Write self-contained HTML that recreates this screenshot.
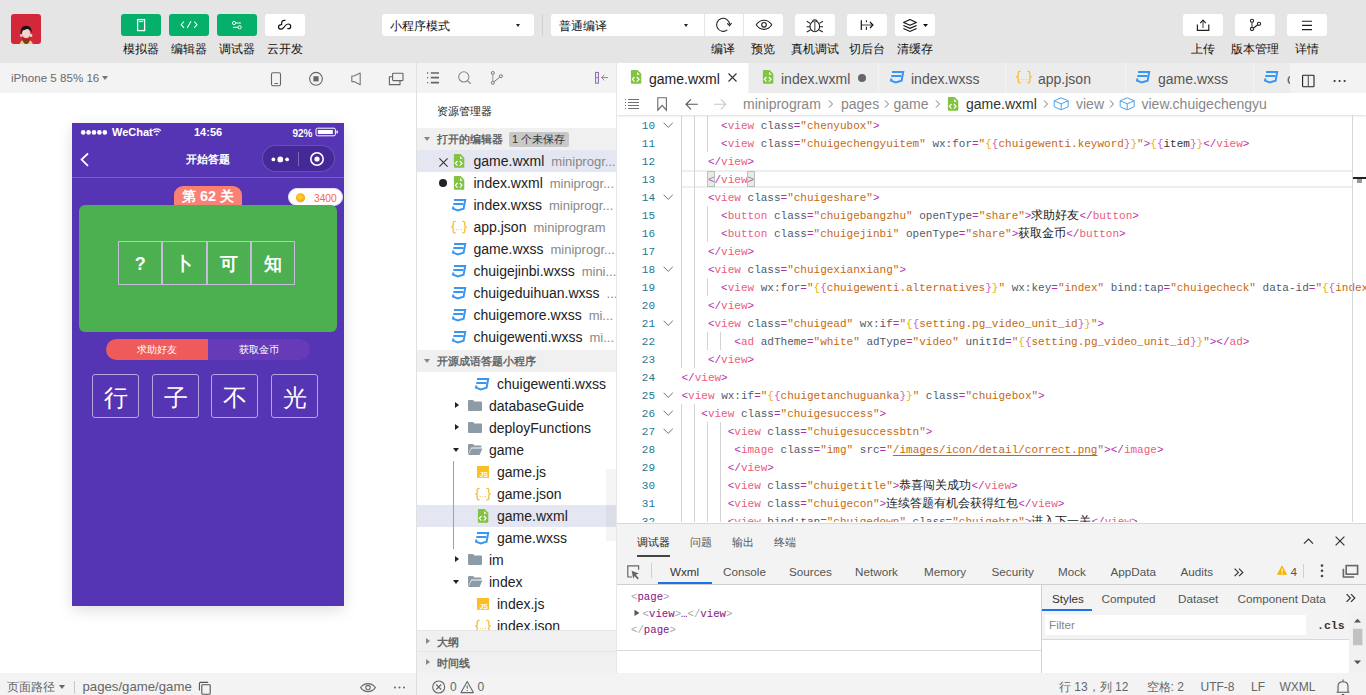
<!DOCTYPE html>
<html><head><meta charset="utf-8">
<style>
*{box-sizing:border-box;margin:0;padding:0}
html,body{width:1366px;height:695px;overflow:hidden;background:#fff;font-family:"Liberation Sans",sans-serif;color:#222}
.a{position:absolute}
#top{left:0;top:0;width:1366px;height:63px;background:#e5e5e5}
.btn{position:absolute;top:14px;width:40px;height:22px;border-radius:3px;background:#fff}
.btn.g{background:#05b06a}
.lbl{position:absolute;top:41px;font-size:12px;line-height:16px;color:#111;text-align:center;white-space:nowrap}
.dd{position:absolute;top:14px;height:22px;background:#fff;border-radius:3px;font-size:12px;line-height:25px;padding-left:8px;color:#111}
.caret{position:absolute;width:0;height:0;border-left:3px solid transparent;border-right:3px solid transparent;border-top:4px solid #222}
svg{position:absolute;overflow:visible}
#simhdr{left:0;top:63px;width:416px;height:30px;background:#f3f3f3}
#sim{left:0;top:93px;width:416px;height:580px;background:#fff}
#foot{left:0;top:673px;width:1366px;height:22px;background:#f3f3f3}
#vsep1{left:416px;top:63px;width:1px;height:610px;background:#e0e0e0}
#exp{left:417px;top:63px;width:199px;height:610px;background:#fff;overflow:hidden}
#edit{left:617px;top:63px;width:749px;height:459px;background:#fff;overflow:hidden}
#dbg{left:617px;top:522px;width:749px;height:151px;background:#f3f3f3}
.ab{width:44.25px;height:44px;border:1px solid #c5bdd9;color:#fff;font-size:18px;font-weight:bold;line-height:44px;text-align:center}
.lb{position:absolute;top:251px;width:47px;height:44px;border:1px solid #b2a5e2;border-radius:3px;color:#fff;font-size:24px;line-height:45px;text-align:center}
.er{position:absolute;left:0;width:199px;height:22px}
.en{position:absolute;top:0;font-size:14px;line-height:22px;color:#222;white-space:nowrap}
.suf{font-size:13px;color:#888;margin-left:7px}
.sh{position:absolute;left:0;width:199px;height:22px;background:#f0f0f0;font-size:11px;line-height:22px;color:#666;font-weight:bold;padding-left:20px}
.tri{position:absolute;left:7px;top:9px;width:0;height:0;border-left:3px solid transparent;border-right:3px solid transparent;border-top:4px solid #888}
.tri.r{left:9px;top:7px;border-top:3px solid transparent;border-bottom:3px solid transparent;border-left:4px solid #888;border-right:none}
.badge{display:inline-block;margin-left:6px;padding:0 4px 0 3px;height:15px;line-height:15px;background:#c8c8c8;border-radius:2px;color:#333;font-weight:normal;font-size:11px;vertical-align:0px}
.tr{position:absolute;width:0;height:0;border-top:3.5px solid transparent;border-bottom:3.5px solid transparent;border-left:4px solid #222}
.td{position:absolute;width:0;height:0;border-left:3.5px solid transparent;border-right:3.5px solid transparent;border-top:4px solid #222}
.tab{position:absolute;top:1px;font-size:14px;line-height:30px;color:#555;white-space:nowrap}
.bc{position:absolute;top:30px;font-size:14px;line-height:22px;color:#888;white-space:nowrap}
.ln{position:absolute;left:0;width:38px;text-align:right;font-family:"Liberation Mono",monospace;font-size:11px;line-height:18px;color:#237893}
.cl{position:absolute;left:64.5px;font-family:"Liberation Mono",monospace;font-size:11px;line-height:18px;white-space:pre;color:#333}
.cj{font-size:12px;color:#222}
.dt{position:absolute;top:12px;font-size:11px;line-height:16px;color:#555}
.dv{position:absolute;top:38px;font-size:11.7px;line-height:24px;color:#555;white-space:nowrap}
.mt{position:absolute;font-family:"Liberation Mono",monospace;font-size:10.7px;line-height:17px;white-space:pre}
.bk{color:#a7a7a7}.tg{color:#881280}
.ft{position:absolute;top:6px;font-size:12px;line-height:16px;color:#666;white-space:nowrap}
</style></head><body>
<svg width="0" height="0" style="position:absolute">
<defs>
<symbol id="i-wxml" viewBox="0 0 22 22"><path d="M6.9 4 H12.6 L16.3 7.7 V16.7 Q16.3 17.7 15.3 17.7 H6.9 Q5.9 17.7 5.9 16.7 V5 Q5.9 4 6.9 4 Z" fill="#82c341"/><path d="M12 6 V8.8 H14.8 Z" fill="#fff"/><path d="M9.5 11 L7.4 13.3 L9.5 15.6 M11.8 11 L14 13.3 L11.8 15.6" stroke="#fff" stroke-width="1.2" fill="none"/></symbol>
<symbol id="i-css" viewBox="0 0 22 22"><path d="M6 6 H17.2 L15.6 14.6 L9.8 16.4 L5 14.6 L5.5 12.6 M5.3 10 H15.2" stroke="#3a97f0" stroke-width="2" fill="none" stroke-linejoin="miter"/></symbol>
<symbol id="i-json" viewBox="0 0 22 22"><path d="M9.7 5.4 H9 Q7.2 5.4 7.2 7 V9.4 Q7.2 10.9 5.2 10.9 Q7.2 10.9 7.2 12.4 V15.2 Q7.2 16.8 9 16.8 H9.7 M16.3 5.4 H17 Q18.8 5.4 18.8 7 V9.4 Q18.8 10.9 20.8 10.9 Q18.8 10.9 18.8 12.4 V15.2 Q18.8 16.8 17 16.8 H16.3" stroke="#f8bb33" stroke-width="1.3" fill="none"/><g fill="#f8c75a"><rect x="9.8" y="13.1" width="1.1" height="1.1"/><rect x="12.3" y="13.1" width="1.1" height="1.1"/><rect x="14.9" y="13.1" width="1.1" height="1.1"/></g></symbol>
<symbol id="i-js" viewBox="0 0 22 22"><rect x="7" y="5" width="12" height="11.8" fill="#fbbf24"/><text x="18" y="16" font-size="7" font-family="Liberation Sans" font-weight="bold" fill="#fff" text-anchor="end">JS</text></symbol>
<symbol id="i-folder" viewBox="0 0 22 22"><path d="M4 6 Q4 5 5 5 H9 L10.5 6.5 H17 Q18 6.5 18 7.5 V15 Q18 16 17 16 H5 Q4 16 4 15 Z" fill="#8c9ba6"/></symbol>
<symbol id="i-folderopen" viewBox="0 0 22 22"><path d="M4 6 Q4 5 5 5 H9 L10.5 6.5 H16.6 Q17.4 6.5 17.4 7.4 V8.6 H7.4 L4 15.6 Z" fill="#8c9ba6"/><path d="M7.6 9.6 H18.4 L15.6 16 H4.2 Z" fill="#8c9ba6"/></symbol>
</defs></svg>
<div id="top" class="a">
  <div class="a" style="left:11px;top:14px;width:30px;height:30px;border-radius:3px;background:#d2283a;overflow:hidden">
    <svg width="30" height="30" style="left:0;top:0">
      <path d="M8.6 30 Q9.6 26.6 13 26 H17.6 Q21 26.6 21.8 30 Z" fill="#e8d060"/>
      <ellipse cx="15.2" cy="19.4" rx="4.2" ry="4.6" fill="#f3d6cc"/>
      <path d="M11.2 24 Q12 30 15.2 30 Q18.4 30 19.2 24 Q15.2 26.4 11.2 24 Z" fill="#7a3b22"/>
      <path d="M9.6 19.2 Q9.2 12.2 15 11.8 Q21 12 20.6 18.6 Q19.6 15.4 17 14.8 Q14 16.2 11.4 16.4 Q10.6 18 10.8 20.4 Z" fill="#141414"/>
      <rect x="9.2" y="20.2" width="2.2" height="2.6" fill="#ddd"/><rect x="19" y="20.2" width="2.2" height="2.6" fill="#ddd"/>
    </svg>
  </div>
  <div class="btn g" style="left:121px"></div>
  <div class="btn g" style="left:169px"></div>
  <div class="btn g" style="left:217px"></div>
  <div class="btn" style="left:265px"></div>
  <div class="lbl" style="left:121px;width:40px">模拟器</div>
  <div class="lbl" style="left:169px;width:40px">编辑器</div>
  <div class="lbl" style="left:217px;width:40px">调试器</div>
  <div class="lbl" style="left:265px;width:40px">云开发</div>

  <div class="dd" style="left:382px;width:152px">小程序模式<span class="caret" style="left:134px;top:10px;border-left-width:2.5px;border-right-width:2.5px;border-top-width:3px"></span></div>
  <div class="a" style="left:542px;top:14px;width:1px;height:22px;background:#d0d0d0"></div>
  <div class="dd" style="left:551px;width:232px;">普通编译<span class="caret" style="left:133px;top:10px;border-left-width:2.5px;border-right-width:2.5px;border-top-width:3px"></span></div>
  <div class="a" style="left:704px;top:14px;width:1px;height:22px;background:#e5e5e5"></div>
  <div class="a" style="left:743px;top:14px;width:1px;height:22px;background:#e5e5e5"></div>
  <div class="btn" style="left:795px"></div>
  <div class="btn" style="left:847px"></div>
  <div class="btn" style="left:895px"></div>
  <div class="lbl" style="left:703px;width:40px">编译</div>
  <div class="lbl" style="left:743px;width:40px">预览</div>
  <div class="lbl" style="left:789px;width:52px">真机调试</div>
  <div class="lbl" style="left:847px;width:40px">切后台</div>
  <div class="lbl" style="left:895px;width:40px">清缓存</div>

  <div class="btn" style="left:1183px"></div>
  <div class="btn" style="left:1235px"></div>
  <div class="btn" style="left:1287px"></div>
  <div class="lbl" style="left:1183px;width:40px">上传</div>
  <div class="lbl" style="left:1229px;width:52px">版本管理</div>
  <div class="lbl" style="left:1287px;width:40px">详情</div>

  <svg width="1366" height="63" style="left:0;top:0" fill="none" stroke-width="1.2">
    <!-- simulator phone -->
    <rect x="137.6" y="19.6" width="7" height="11" stroke="#fff" stroke-width="1.3"/>
    <line x1="139" y1="21.6" x2="143.2" y2="21.6" stroke="#fff" stroke-width="1"/>
    <!-- code -->
    <path d="M184 21.5 L181.2 24.7 L184 27.8 M191 21.3 L187.2 28 M194.2 21.5 L197 24.7 L194.2 27.8" stroke="#fff" stroke-width="1.1"/>
    <!-- debugger sliders -->
    <circle cx="234" cy="23" r="1.6" stroke="#fff" stroke-width="1"/>
    <line x1="235.6" y1="23" x2="241" y2="23" stroke="#fff" stroke-width="1"/>
    <circle cx="239.6" cy="27.3" r="1.6" stroke="#fff" stroke-width="1"/>
    <line x1="233" y1="27.3" x2="238" y2="27.3" stroke="#fff" stroke-width="1"/>
    <!-- cloud -->
    <path d="M285.5 20.5 C283.8 20.1 281.8 20.6 281.7 22.6 L281.6 24.6 C279.8 24.6 278.5 25.6 278.5 26.9 C278.5 28.3 279.7 29.1 281 29.1 C282.4 29.1 283.4 28 284.3 26.8 C285.2 25.5 286.2 24 288.2 24 C289.6 24 290.7 25 290.7 26.4 C290.7 27.8 289.7 28.7 288.4 28.7 L287.3 28.5" stroke="#111" stroke-width="1.2"/>
    <!-- refresh -->
    <path d="M727.3 29.8 A6.5 6.5 0 1 1 729.6 24.6" stroke="#222" stroke-width="1.1"/>
    <path d="M727.2 23.4 L729.6 25.6 L731.6 23" stroke="#222" stroke-width="1.1"/>
    <!-- eye -->
    <path d="M756.2 24.8 C758.5 21.4 761 20.2 764 20.2 C767 20.2 769.5 21.4 771.8 24.8 C769.5 28.2 767 29.4 764 29.4 C761 29.4 758.5 28.2 756.2 24.8 Z" stroke="#222" stroke-width="1.1"/>
    <circle cx="764" cy="24.8" r="2.3" stroke="#222" stroke-width="1.1"/>
    <!-- bug -->
    <ellipse cx="814.8" cy="26.4" rx="4.8" ry="5.4" stroke="#222" stroke-width="1.1"/>
    <path d="M812.3 21.6 A2.6 2.6 0 0 1 817.3 21.6" stroke="#222" stroke-width="1.1"/>
    <line x1="814.8" y1="21.2" x2="814.8" y2="31.6" stroke="#666" stroke-width="1.3"/>
    <path d="M810.2 23.4 L806.8 21.2 M810 26.8 L806.6 26.8 M810.4 30 L806.8 32 M819.4 23.4 L822.8 21.2 M819.6 26.8 L823 26.8 M819.2 30 L822.8 32" stroke="#222" stroke-width="1.1"/>
    <!-- background -->
    <line x1="861.3" y1="20.2" x2="861.3" y2="29.9" stroke="#111" stroke-width="1.2"/>
    <path d="M866.4 20.2 V22.2 M866.4 26.8 V29.9" stroke="#222" stroke-width="1.1"/>
    <line x1="862" y1="25" x2="872" y2="25" stroke="#777" stroke-width="1.4"/>
    <path d="M870 22 L872.9 25 L870 28" stroke="#111" stroke-width="1.2"/>
    <!-- layers -->
    <path d="M910 19.6 L916.4 22.4 L910 25.2 L903.6 22.4 Z" stroke="#111" stroke-width="1.1" stroke-linejoin="round"/>
    <path d="M903.4 25.4 L910 28.3 L916.6 25.4 M903.4 28.5 L910 31.4 L916.6 28.5" stroke="#111" stroke-width="1.1"/>
    <path d="M923 24 L928 24 L925.5 27 Z" fill="#111" stroke="none"/>
    <!-- upload -->
    <path d="M1197.4 24.6 V30.4 H1208.8 V24.6" stroke="#222" stroke-width="1.2"/>
    <line x1="1203" y1="20.6" x2="1203" y2="28" stroke="#666" stroke-width="1.3"/>
    <path d="M1200.2 23.2 L1203 20.2 L1205.8 23.2" stroke="#222" stroke-width="1.2"/>
    <!-- branch -->
    <circle cx="1252" cy="20.8" r="1.6" stroke="#222" stroke-width="1.1"/>
    <circle cx="1252" cy="29" r="1.6" stroke="#222" stroke-width="1.1"/>
    <circle cx="1259" cy="23.8" r="1.6" stroke="#222" stroke-width="1.1"/>
    <line x1="1252" y1="22.4" x2="1252" y2="27.4" stroke="#555" stroke-width="1.2"/>
    <line x1="1253.4" y1="28.2" x2="1257.6" y2="24.8" stroke="#222" stroke-width="1.1"/>
    <!-- menu -->
    <path d="M1302 21.3 H1312 M1302 25.4 H1312 M1302 29.6 H1312" stroke="#222" stroke-width="1.1"/>
  </svg>
</div>

<div id="simhdr" class="a">
  <div class="a" style="left:11px;top:7px;font-size:11.6px;line-height:16px;color:#6a6a6a">iPhone 5 85% 16</div>
  <span class="caret" style="left:102px;top:13px;border-top-color:#777;border-left-width:3.5px;border-right-width:3.5px"></span>
  <svg width="416" height="30" style="left:0;top:0" fill="none">
    <rect x="271.5" y="72.8" width="9" height="13" rx="1.5" stroke="#666" stroke-width="1.1" transform="translate(0,-63)"/>
    <line x1="274.5" y1="20.5" x2="278" y2="20.5" stroke="#666" stroke-width="1"/>
    <circle cx="316" cy="15.8" r="6.4" stroke="#666" stroke-width="1.1"/>
    <rect x="313.4" y="13.2" width="5.2" height="5.2" fill="#666"/>
    <path d="M351.8 13 H354 L360.2 10 V21.8 L354 18.6 H351.8 Z" stroke="#777" stroke-width="1.1" stroke-linejoin="round"/>
    <rect x="392.6" y="10.2" width="10.4" height="7.4" rx="0.8" stroke="#666" stroke-width="1.1"/>
    <path d="M392.4 13.8 H389.4 V21.6 H400 V17.8" stroke="#666" stroke-width="1.1"/>
  </svg>
</div>
<div id="sim" class="a">
  <div id="phone" class="a" style="left:72px;top:30px;width:272px;height:483px;background:#5535b4;box-shadow:0 4px 14px rgba(0,0,0,0.13);overflow:hidden">
    <svg width="272" height="60" style="left:0;top:0">
      <g fill="#fff"><circle cx="11.2" cy="9.4" r="2.3"/><circle cx="16.6" cy="9.4" r="2.3"/><circle cx="22" cy="9.4" r="2.3"/><circle cx="27.4" cy="9.4" r="2.3"/><circle cx="32.8" cy="9.4" r="2.3"/></g>
      <path d="M80.4 7.6 A6 6 0 0 1 89 7.6" stroke="#fff" stroke-width="1.2" fill="none"/>
      <path d="M82 9.4 A3.6 3.6 0 0 1 87.4 9.4" stroke="#fff" stroke-width="1.2" fill="none"/>
      <circle cx="84.7" cy="11.4" r="1" fill="#fff"/>
      <rect x="244" y="5.2" width="19.4" height="7.6" rx="1.4" stroke="#fff" stroke-width="1" fill="none"/>
      <rect x="245.8" y="7" width="15" height="4" fill="#fff"/>
      <rect x="264.4" y="7.6" width="1.4" height="2.8" fill="#fff"/>
      <path d="M16 30.5 L9.6 36.6 L16 42.8" stroke="#fff" stroke-width="1.8" fill="none"/>
      <line x1="0" y1="54.5" x2="272" y2="54.5" stroke="#7460c4" stroke-width="1"/>
    </svg>
    <div class="a" style="left:40px;top:2px;font-size:11px;line-height:14px;color:#fff;font-weight:bold">WeChat</div>
    <div class="a" style="left:122px;top:2px;font-size:11px;line-height:14px;color:#fff;font-weight:bold">14:56</div>
    <div class="a" style="left:220.5px;top:4px;font-size:10px;line-height:14px;color:#fff;font-weight:bold">92%</div>
    <div class="a" style="left:0;top:28px;width:272px;text-align:center;font-size:11px;line-height:16px;color:#fff;font-weight:bold">开始答题</div>
    <div class="a" style="left:190px;top:22px;width:73px;height:27px;border-radius:14px;background:rgba(20,0,60,0.22);border:1px solid rgba(255,255,255,0.18)"></div>
    <svg width="272" height="60" style="left:0;top:0">
      <circle cx="201.4" cy="36.4" r="1.9" fill="#fff"/><circle cx="208.3" cy="36.4" r="2.9" fill="#fff"/><circle cx="215.1" cy="36.4" r="1.9" fill="#fff"/>
      <line x1="226.5" y1="29" x2="226.5" y2="43" stroke="rgba(255,255,255,0.3)" stroke-width="1"/>
      <circle cx="245" cy="36" r="6.2" stroke="#fff" stroke-width="1.6" fill="none"/>
      <circle cx="245" cy="36" r="2.6" fill="#fff"/>
    </svg>
    <div class="a" style="left:102px;top:63px;width:68px;height:22px;background:#fa8073;border-radius:9px 9px 0 0;color:#fff;font-size:14.4px;line-height:21px;text-align:center;font-weight:bold">第 62 关</div>
    <div class="a" style="left:216px;top:65px;width:55px;height:18px;background:#fff;border-radius:9px;border:1px solid #e8e0f0"></div>
    <svg width="272" height="100" style="left:0;top:0"><defs><radialGradient id="cg" cx="0.45" cy="0.45" r="0.6"><stop offset="0" stop-color="#ffd43a"/><stop offset="1" stop-color="#f5a210"/></radialGradient></defs><circle cx="228.5" cy="74.8" r="4.6" fill="url(#cg)"/></svg>
    <div class="a" style="left:242px;top:69.5px;font-size:10.2px;line-height:12px;color:#f5683f">3400</div>
    <div class="a" style="left:7px;top:82px;width:258px;height:127px;background:#4caf50;border-radius:6px"></div>
    <div class="a" style="left:46px;top:118px;width:177px;height:44px;display:flex">
      <div class="ab">?</div><div class="ab">卜</div><div class="ab">可</div><div class="ab">知</div>
    </div>
    <div class="a" style="left:34px;top:216px;width:102px;height:21px;background:#ef5b5b;border-radius:11px 0 0 11px;color:#fff;font-size:9.6px;line-height:21px;text-align:center">求助好友</div>
    <div class="a" style="left:136px;top:216px;width:102px;height:21px;background:#673ab7;border-radius:0 11px 11px 0;color:#fff;font-size:9.6px;line-height:21px;text-align:center">获取金币</div>
    <div class="lb" style="left:20px">行</div>
    <div class="lb" style="left:80px">子</div>
    <div class="lb" style="left:139px">不</div>
    <div class="lb" style="left:199px">光</div>
  </div>
</div>
<div id="vsep1" class="a"></div>
<div class="a" style="left:616px;top:63px;width:1px;height:610px;background:#e6e6e6;z-index:2"></div>
<div id="exp" class="a">
  <div class="a" style="left:0;top:0;width:199px;height:30px;background:#f3f3f3"></div>
  <svg width="199" height="30" style="left:0;top:0" fill="none">
    <path d="M10 10 H11.2 M10 14.6 H11.2 M10 19.6 H11.2" stroke="#666" stroke-width="1.4"/>
    <path d="M13.8 10 H22 M13.8 14.6 H22 M13.8 19.6 H22" stroke="#666" stroke-width="1.6"/>
    <circle cx="46.8" cy="13.9" r="5.1" stroke="#8a8a8a" stroke-width="1.1"/><line x1="50.4" y1="17.6" x2="53.8" y2="20.8" stroke="#8a8a8a" stroke-width="1.2"/>
    <circle cx="75.8" cy="10" r="1.5" stroke="#777" stroke-width="1"/><circle cx="75.8" cy="19.8" r="1.5" stroke="#777" stroke-width="1"/><circle cx="83.9" cy="13.2" r="1.5" stroke="#777" stroke-width="1"/>
    <line x1="75.8" y1="11.5" x2="75.8" y2="18.3" stroke="#7a9ab0" stroke-width="1"/><line x1="76.9" y1="18.8" x2="82.8" y2="14.2" stroke="#777" stroke-width="1"/>
    <rect x="178.6" y="9.4" width="2.8" height="10.8" stroke="#8a62b8" stroke-width="1"/><line x1="178.6" y1="14.6" x2="181.4" y2="14.6" stroke="#8a62b8" stroke-width="0.8"/>
    <path d="M184.6 14.6 H191 M187.4 11.8 L184.6 14.6 L187.4 17.4" stroke="#888" stroke-width="1"/>
  </svg>
  <div class="a" style="left:20px;top:40px;font-size:11px;line-height:16px;color:#222">资源管理器</div>
  <div class="sh" style="top:65px"><span class="tri"></span>打开的编辑器<span class="badge">1 个未保存</span></div>
  <div class="er" style="top:87px;background:#e4e6f1;"><svg width="12" height="12" style="left:21px;top:6.5px"><path d="M1.4 1.4 L9.6 9.6 M9.6 1.4 L1.4 9.6" stroke="#333" stroke-width="1.1"/></svg><svg width="22" height="22" style="left:31px;top:0"><use href="#i-wxml"/></svg><div class="en" style="left:56.5px">game.wxml<span class="suf">miniprogr...</span></div></div>
  <div class="er" style="top:109px;"><div class="a" style="left:22px;top:7px;width:8px;height:8px;border-radius:50%;background:#222"></div><svg width="22" height="22" style="left:31px;top:0"><use href="#i-wxml"/></svg><div class="en" style="left:56.5px">index.wxml<span class="suf">miniprogr...</span></div></div>
  <div class="er" style="top:131px;"><svg width="22" height="22" style="left:31px;top:0"><use href="#i-css"/></svg><div class="en" style="left:56.5px">index.wxss<span class="suf">miniprogr...</span></div></div>
  <div class="er" style="top:153px;"><svg width="22" height="22" style="left:29px;top:0"><use href="#i-json"/></svg><div class="en" style="left:56.5px">app.json<span class="suf">miniprogram</span></div></div>
  <div class="er" style="top:175px;"><svg width="22" height="22" style="left:31px;top:0"><use href="#i-css"/></svg><div class="en" style="left:56.5px">game.wxss<span class="suf">miniprogr...</span></div></div>
  <div class="er" style="top:197px;"><svg width="22" height="22" style="left:31px;top:0"><use href="#i-css"/></svg><div class="en" style="left:56.5px">chuigejinbi.wxss<span class="suf">mini...</span></div></div>
  <div class="er" style="top:219px;"><svg width="22" height="22" style="left:31px;top:0"><use href="#i-css"/></svg><div class="en" style="left:56.5px">chuigeduihuan.wxss<span class="suf">...</span></div></div>
  <div class="er" style="top:241px;"><svg width="22" height="22" style="left:31px;top:0"><use href="#i-css"/></svg><div class="en" style="left:56.5px">chuigemore.wxss<span class="suf">mi...</span></div></div>
  <div class="er" style="top:263px;"><svg width="22" height="22" style="left:31px;top:0"><use href="#i-css"/></svg><div class="en" style="left:56.5px">chuigewenti.wxss<span class="suf">mi...</span></div></div>
  <div class="sh" style="top:287px"><span class="tri"></span>开源成语答题小程序</div>
  <div class="er" style="top:310px;"><svg width="22" height="22" style="left:54px;top:0"><use href="#i-css"/></svg><div class="en" style="left:80px">chuigewenti.wxss</div></div>
  <div class="er" style="top:332px;"><span class="tr" style="left:38px;top:7px"></span><svg width="22" height="22" style="left:47px;top:0"><use href="#i-folder"/></svg><div class="en" style="left:72px">databaseGuide</div></div>
  <div class="er" style="top:354px;"><span class="tr" style="left:38px;top:7px"></span><svg width="22" height="22" style="left:47px;top:0"><use href="#i-folder"/></svg><div class="en" style="left:72px">deployFunctions</div></div>
  <div class="er" style="top:376px;"><span class="td" style="left:36px;top:9px"></span><svg width="22" height="22" style="left:47px;top:0"><use href="#i-folderopen"/></svg><div class="en" style="left:72px">game</div></div>
  <div class="er" style="top:398px;"><svg width="22" height="22" style="left:53px;top:0"><use href="#i-js"/></svg><div class="en" style="left:80px">game.js</div></div>
  <div class="er" style="top:420px;"><svg width="22" height="22" style="left:53px;top:0"><use href="#i-json"/></svg><div class="en" style="left:80px">game.json</div></div>
  <div class="er" style="top:442px;background:#e4e6f1;"><svg width="22" height="22" style="left:55px;top:0"><use href="#i-wxml"/></svg><div class="en" style="left:80px">game.wxml</div></div>
  <div class="er" style="top:464px;"><svg width="22" height="22" style="left:54px;top:0"><use href="#i-css"/></svg><div class="en" style="left:80px">game.wxss</div></div>
  <div class="er" style="top:486px;"><span class="tr" style="left:38px;top:7px"></span><svg width="22" height="22" style="left:47px;top:0"><use href="#i-folder"/></svg><div class="en" style="left:72px">im</div></div>
  <div class="er" style="top:508px;"><span class="td" style="left:36px;top:9px"></span><svg width="22" height="22" style="left:47px;top:0"><use href="#i-folderopen"/></svg><div class="en" style="left:72px">index</div></div>
  <div class="er" style="top:530px;"><svg width="22" height="22" style="left:53px;top:0"><use href="#i-js"/></svg><div class="en" style="left:80px">index.js</div></div>
  <div class="er" style="top:552px;"><svg width="22" height="22" style="left:53px;top:0"><use href="#i-json"/></svg><div class="en" style="left:80px">index.json</div></div>
  <div class="a" style="left:36px;top:398px;width:1px;height:88px;background:#a0a0a0"></div>
  <div class="a" style="left:189px;top:406px;width:10px;height:72px;background:rgba(0,0,0,0.04)"></div>
  <div class="sh" style="top:567px;border-top:1px solid #e6e6e6"><span class="tri r"></span>大纲</div>
  <div class="sh" style="top:588px;border-top:1px solid #e6e6e6"><span class="tri r"></span>时间线</div>
</div>
<div id="edit" class="a">
  <div class="a" style="left:0;top:0;width:749px;height:30px;background:#ececec"></div>
  <div class="a" style="left:0;top:0;width:131px;height:30px;background:#fff"></div>
  <div class="a" style="left:131px;top:0;width:1px;height:30px;background:#f4f4f4"></div>
  <div class="a" style="left:261px;top:0;width:1px;height:30px;background:#f4f4f4"></div>
  <div class="a" style="left:388px;top:0;width:1px;height:30px;background:#f4f4f4"></div>
  <div class="a" style="left:508px;top:0;width:1px;height:30px;background:#f4f4f4"></div>
  <div class="a" style="left:636px;top:0;width:1px;height:30px;background:#f4f4f4"></div>
  <svg width="22" height="22" style="left:8px;top:3px"><use href="#i-wxml"/></svg>
  <div class="tab" style="left:32px;color:#222">game.wxml</div>
  <svg width="12" height="12" style="left:110px;top:9px"><path d="M1.5 1.5 L9.5 9.5 M9.5 1.5 L1.5 9.5" stroke="#333" stroke-width="1.1"/></svg>
  <svg width="22" height="22" style="left:140px;top:3px"><use href="#i-wxml"/></svg>
  <div class="tab" style="left:164px">index.wxml</div>
  <div class="a" style="left:241px;top:11px;width:8px;height:8px;border-radius:50%;background:#666"></div>
  <svg width="22" height="22" style="left:269px;top:3px"><use href="#i-css"/></svg>
  <div class="tab" style="left:294px">index.wxss</div>
  <svg width="22" height="22" style="left:394px;top:3px"><use href="#i-json"/></svg>
  <div class="tab" style="left:421px">app.json</div>
  <svg width="22" height="22" style="left:515px;top:3px"><use href="#i-css"/></svg>
  <div class="tab" style="left:541px">game.wxss</div>
  <svg width="22" height="22" style="left:643px;top:3px"><use href="#i-css"/></svg>
  <div class="tab" style="left:670px">c</div>
  <div class="a" style="left:673px;top:0;width:76px;height:30px;background:#f3f3f3"></div>
  <svg width="76" height="30" style="left:673px;top:0" fill="none">
    <rect x="12.6" y="12.3" width="11.4" height="11.4" rx="0.8" stroke="#222" stroke-width="1.1"/>
    <line x1="18.3" y1="12.3" x2="18.3" y2="23.7" stroke="#555" stroke-width="1.1"/>
    <circle cx="44.6" cy="18" r="1.1" fill="#333"/><circle cx="49.6" cy="18" r="1.1" fill="#333"/><circle cx="54.6" cy="18" r="1.1" fill="#333"/>
  </svg>
  <div class="a" style="left:0;top:30px;width:749px;height:22px;background:#fff;box-shadow:0 1px 2px rgba(0,0,0,0.08)"></div>
  <svg width="749" height="22" style="left:0;top:30px" fill="none">
    <g stroke="#707070" stroke-width="1"><path d="M11 6.5 H22 M11 9.5 H22 M11 12.5 H22 M11 15.5 H22"/></g><g fill="#8a6a9a"><rect x="8" y="6" width="1" height="1"/><rect x="8" y="9" width="1" height="1"/><rect x="8" y="12" width="1" height="1"/><rect x="8" y="15" width="1" height="1"/></g>
    <path d="M40.8 4.8 V17.2 L45.1 12.4 L49.4 17.2 V4.8 Z" stroke="#6a6a6a" stroke-width="1.1" stroke-linejoin="miter"/>
    <path d="M69 11.3 H80.8 M74 6.3 L69 11.3 L74 16.3" stroke="#555" stroke-width="1.1"/>
    <path d="M97 11.3 H108.8 M103.8 6.3 L108.8 11.3 L103.8 16.3" stroke="#c8c8c8" stroke-width="1.1"/>
    <path d="M212 7.4 L215.5 11 L212 14.6 M268 7.4 L271.5 11 L268 14.6 M319 7.4 L322.5 11 L319 14.6 M427 7.4 L430.5 11 L427 14.6 M493 7.4 L496.5 11 L493 14.6" stroke="#777" stroke-width="1"/>
    <g stroke="#4ea3e8" stroke-width="1" stroke-linejoin="round"><path d="M437.2 7.8 L444.2 4.8 L451.2 7.8 V13.8 L444.2 16.8 L437.2 13.8 Z M437.2 7.8 L444.2 10.8 L451.2 7.8 M444.2 10.8 V16.8"/><path d="M503.2 7.8 L510.2 4.8 L517.2 7.8 V13.8 L510.2 16.8 L503.2 13.8 Z M503.2 7.8 L510.2 10.8 L517.2 7.8 M510.2 10.8 V16.8"/></g>
  </svg>
  <svg width="22" height="22" style="left:324.5px;top:30px"><use href="#i-wxml"/></svg>
  <div class="bc" style="left:126px">miniprogram</div>
  <div class="bc" style="left:224px">pages</div>
  <div class="bc" style="left:276.5px">game</div>
  <div class="bc" style="left:349px;color:#333">game.wxml</div>
  <div class="bc" style="left:459px">view</div>
  <div class="bc" style="left:524.5px">view.chuigechengyu</div>
  <div class="a" style="left:0;top:52px;width:749px;height:407px;overflow:hidden">
  <div class="a" style="left:0;top:-52px;width:749px;height:459px">
<div class="a" style="left:64px;top:107px;width:671px;height:18px;border-top:2px solid #eeeeee;border-bottom:2px solid #eeeeee"></div>
<div class="a" style="left:63.5px;top:53px;width:1px;height:252px;background:#d3d3d3"></div>
<div class="a" style="left:76.7px;top:53px;width:1px;height:252px;background:#d3d3d3"></div>
<div class="a" style="left:89.9px;top:53px;width:1px;height:36px;background:#d3d3d3"></div>
<div class="a" style="left:89.9px;top:143px;width:1px;height:36px;background:#d3d3d3"></div>
<div class="a" style="left:89.9px;top:215px;width:1px;height:18px;background:#d3d3d3"></div>
<div class="a" style="left:89.9px;top:269px;width:1px;height:18px;background:#d3d3d3"></div>
<div class="a" style="left:103.1px;top:269px;width:1px;height:18px;background:#d3d3d3"></div>
<div class="a" style="left:63.5px;top:341px;width:1px;height:126px;background:#d3d3d3"></div>
<div class="a" style="left:76.7px;top:341px;width:1px;height:126px;background:#d3d3d3"></div>
<div class="a" style="left:89.9px;top:359px;width:1px;height:108px;background:#d3d3d3"></div>
<div class="a" style="left:103.1px;top:359px;width:1px;height:108px;background:#d3d3d3"></div>
<div class="ln" style="top:54px">10</div>
<svg width="12" height="8" style="left:46px;top:59px"><path d="M0.6 0.8 L5.2 5.4 L9.8 0.8" stroke="#6f6f6f" stroke-width="1" fill="none"/></svg>
<div class="cl" style="top:54px">      <span style="color:#b02fb0">&lt;</span><span style="color:#ec5b7c">view</span> <span style="color:#4f5b6b">class</span><span style="color:#b02fb0">=</span><span style="color:#c5680f">"chenyubox"</span><span style="color:#b02fb0">&gt;</span></div>
<div class="ln" style="top:72px">11</div>
<div class="cl" style="top:72px">      <span style="color:#b02fb0">&lt;</span><span style="color:#ec5b7c">view</span> <span style="color:#4f5b6b">class</span><span style="color:#b02fb0">=</span><span style="color:#c5680f">"chuigechengyuitem"</span> <span style="color:#4f5b6b">wx:for</span><span style="color:#b02fb0">=</span><span style="color:#c5680f">"</span><span style="color:#eeb000">{</span><span style="color:#cc5ccf">{</span><span style="color:#c5680f">chuigewenti.keyword</span><span style="color:#cc5ccf">}</span><span style="color:#eeb000">}</span><span style="color:#c5680f">"</span><span style="color:#b02fb0">&gt;</span><span style="color:#eeb000">{</span><span style="color:#cc5ccf">{</span><span style="color:#333333">item</span><span style="color:#cc5ccf">}</span><span style="color:#eeb000">}</span><span style="color:#b02fb0">&lt;/</span><span style="color:#ec5b7c">view</span><span style="color:#b02fb0">&gt;</span></div>
<div class="ln" style="top:90px">12</div>
<div class="cl" style="top:90px">    <span style="color:#b02fb0">&lt;/</span><span style="color:#ec5b7c">view</span><span style="color:#b02fb0">&gt;</span></div>
<div class="ln" style="top:108px">13</div>
<div class="cl" style="top:108px">    <span style="color:#b02fb0">&lt;/</span><span style="color:#ec5b7c">view</span><span style="color:#b02fb0">&gt;</span></div>
<div class="ln" style="top:126px">14</div>
<svg width="12" height="8" style="left:46px;top:131px"><path d="M0.6 0.8 L5.2 5.4 L9.8 0.8" stroke="#6f6f6f" stroke-width="1" fill="none"/></svg>
<div class="cl" style="top:126px">    <span style="color:#b02fb0">&lt;</span><span style="color:#ec5b7c">view</span> <span style="color:#4f5b6b">class</span><span style="color:#b02fb0">=</span><span style="color:#c5680f">"chuigeshare"</span><span style="color:#b02fb0">&gt;</span></div>
<div class="ln" style="top:144px">15</div>
<div class="cl" style="top:144px">      <span style="color:#b02fb0">&lt;</span><span style="color:#ec5b7c">button</span> <span style="color:#4f5b6b">class</span><span style="color:#b02fb0">=</span><span style="color:#c5680f">"chuigebangzhu"</span> <span style="color:#4f5b6b">openType</span><span style="color:#b02fb0">=</span><span style="color:#c5680f">"share"</span><span style="color:#b02fb0">&gt;</span><span class="cj">求助好友</span><span style="color:#b02fb0">&lt;/</span><span style="color:#ec5b7c">button</span><span style="color:#b02fb0">&gt;</span></div>
<div class="ln" style="top:162px">16</div>
<div class="cl" style="top:162px">      <span style="color:#b02fb0">&lt;</span><span style="color:#ec5b7c">button</span> <span style="color:#4f5b6b">class</span><span style="color:#b02fb0">=</span><span style="color:#c5680f">"chuigejinbi"</span> <span style="color:#4f5b6b">openType</span><span style="color:#b02fb0">=</span><span style="color:#c5680f">"share"</span><span style="color:#b02fb0">&gt;</span><span class="cj">获取金币</span><span style="color:#b02fb0">&lt;/</span><span style="color:#ec5b7c">button</span><span style="color:#b02fb0">&gt;</span></div>
<div class="ln" style="top:180px">17</div>
<div class="cl" style="top:180px">    <span style="color:#b02fb0">&lt;/</span><span style="color:#ec5b7c">view</span><span style="color:#b02fb0">&gt;</span></div>
<div class="ln" style="top:198px">18</div>
<svg width="12" height="8" style="left:46px;top:203px"><path d="M0.6 0.8 L5.2 5.4 L9.8 0.8" stroke="#6f6f6f" stroke-width="1" fill="none"/></svg>
<div class="cl" style="top:198px">    <span style="color:#b02fb0">&lt;</span><span style="color:#ec5b7c">view</span> <span style="color:#4f5b6b">class</span><span style="color:#b02fb0">=</span><span style="color:#c5680f">"chuigexianxiang"</span><span style="color:#b02fb0">&gt;</span></div>
<div class="ln" style="top:216px">19</div>
<div class="cl" style="top:216px">      <span style="color:#b02fb0">&lt;</span><span style="color:#ec5b7c">view</span> <span style="color:#4f5b6b">wx:for</span><span style="color:#b02fb0">=</span><span style="color:#c5680f">"</span><span style="color:#eeb000">{</span><span style="color:#cc5ccf">{</span><span style="color:#c5680f">chuigewenti.alternatives</span><span style="color:#cc5ccf">}</span><span style="color:#eeb000">}</span><span style="color:#c5680f">"</span> <span style="color:#4f5b6b">wx:key</span><span style="color:#b02fb0">=</span><span style="color:#c5680f">"index"</span> <span style="color:#4f5b6b">bind:tap</span><span style="color:#b02fb0">=</span><span style="color:#c5680f">"chuigecheck"</span> <span style="color:#4f5b6b">data-id</span><span style="color:#b02fb0">=</span><span style="color:#c5680f">"</span><span style="color:#eeb000">{</span><span style="color:#cc5ccf">{</span><span style="color:#c5680f">index</span><span style="color:#cc5ccf">}</span><span style="color:#eeb000">}</span><span style="color:#c5680f">"</span><span style="color:#b02fb0">&gt;</span></div>
<div class="ln" style="top:234px">20</div>
<div class="cl" style="top:234px">    <span style="color:#b02fb0">&lt;/</span><span style="color:#ec5b7c">view</span><span style="color:#b02fb0">&gt;</span></div>
<div class="ln" style="top:252px">21</div>
<svg width="12" height="8" style="left:46px;top:257px"><path d="M0.6 0.8 L5.2 5.4 L9.8 0.8" stroke="#6f6f6f" stroke-width="1" fill="none"/></svg>
<div class="cl" style="top:252px">    <span style="color:#b02fb0">&lt;</span><span style="color:#ec5b7c">view</span> <span style="color:#4f5b6b">class</span><span style="color:#b02fb0">=</span><span style="color:#c5680f">"chuigead"</span> <span style="color:#4f5b6b">wx:if</span><span style="color:#b02fb0">=</span><span style="color:#c5680f">"</span><span style="color:#eeb000">{</span><span style="color:#cc5ccf">{</span><span style="color:#c5680f">setting.pg_video_unit_id</span><span style="color:#cc5ccf">}</span><span style="color:#eeb000">}</span><span style="color:#c5680f">"</span><span style="color:#b02fb0">&gt;</span></div>
<div class="ln" style="top:270px">22</div>
<div class="cl" style="top:270px">        <span style="color:#b02fb0">&lt;</span><span style="color:#ec5b7c">ad</span> <span style="color:#4f5b6b">adTheme</span><span style="color:#b02fb0">=</span><span style="color:#c5680f">"white"</span> <span style="color:#4f5b6b">adType</span><span style="color:#b02fb0">=</span><span style="color:#c5680f">"video"</span> <span style="color:#4f5b6b">unitId</span><span style="color:#b02fb0">=</span><span style="color:#c5680f">"</span><span style="color:#eeb000">{</span><span style="color:#cc5ccf">{</span><span style="color:#c5680f">setting.pg_video_unit_id</span><span style="color:#cc5ccf">}</span><span style="color:#eeb000">}</span><span style="color:#c5680f">"</span><span style="color:#b02fb0">&gt;</span><span style="color:#b02fb0">&lt;/</span><span style="color:#ec5b7c">ad</span><span style="color:#b02fb0">&gt;</span></div>
<div class="ln" style="top:288px">23</div>
<div class="cl" style="top:288px">    <span style="color:#b02fb0">&lt;/</span><span style="color:#ec5b7c">view</span><span style="color:#b02fb0">&gt;</span></div>
<div class="ln" style="top:306px">24</div>
<div class="cl" style="top:306px"><span style="color:#b02fb0">&lt;/</span><span style="color:#ec5b7c">view</span><span style="color:#b02fb0">&gt;</span></div>
<div class="ln" style="top:324px">25</div>
<svg width="12" height="8" style="left:46px;top:329px"><path d="M0.6 0.8 L5.2 5.4 L9.8 0.8" stroke="#6f6f6f" stroke-width="1" fill="none"/></svg>
<div class="cl" style="top:324px"><span style="color:#b02fb0">&lt;</span><span style="color:#ec5b7c">view</span> <span style="color:#4f5b6b">wx:if</span><span style="color:#b02fb0">=</span><span style="color:#c5680f">"</span><span style="color:#eeb000">{</span><span style="color:#cc5ccf">{</span><span style="color:#c5680f">chuigetanchuguanka</span><span style="color:#cc5ccf">}</span><span style="color:#eeb000">}</span><span style="color:#c5680f">"</span> <span style="color:#4f5b6b">class</span><span style="color:#b02fb0">=</span><span style="color:#c5680f">"chuigebox"</span><span style="color:#b02fb0">&gt;</span></div>
<div class="ln" style="top:342px">26</div>
<svg width="12" height="8" style="left:46px;top:347px"><path d="M0.6 0.8 L5.2 5.4 L9.8 0.8" stroke="#6f6f6f" stroke-width="1" fill="none"/></svg>
<div class="cl" style="top:342px">   <span style="color:#b02fb0">&lt;</span><span style="color:#ec5b7c">view</span> <span style="color:#4f5b6b">class</span><span style="color:#b02fb0">=</span><span style="color:#c5680f">"chuigesuccess"</span><span style="color:#b02fb0">&gt;</span></div>
<div class="ln" style="top:360px">27</div>
<svg width="12" height="8" style="left:46px;top:365px"><path d="M0.6 0.8 L5.2 5.4 L9.8 0.8" stroke="#6f6f6f" stroke-width="1" fill="none"/></svg>
<div class="cl" style="top:360px">       <span style="color:#b02fb0">&lt;</span><span style="color:#ec5b7c">view</span> <span style="color:#4f5b6b">class</span><span style="color:#b02fb0">=</span><span style="color:#c5680f">"chuigesuccessbtn"</span><span style="color:#b02fb0">&gt;</span></div>
<div class="ln" style="top:378px">28</div>
<div class="cl" style="top:378px">        <span style="color:#b02fb0">&lt;</span><span style="color:#ec5b7c">image</span> <span style="color:#4f5b6b">class</span><span style="color:#b02fb0">=</span><span style="color:#c5680f">"img"</span> <span style="color:#4f5b6b">src</span><span style="color:#b02fb0">=</span><span style="color:#c5680f">"<span style="text-decoration:underline;text-decoration-color:#c5680f;text-underline-offset:2px">/images/icon/detail/correct.png</span>"</span><span style="color:#b02fb0">&gt;</span><span style="color:#b02fb0">&lt;/</span><span style="color:#ec5b7c">image</span><span style="color:#b02fb0">&gt;</span></div>
<div class="ln" style="top:396px">29</div>
<div class="cl" style="top:396px">       <span style="color:#b02fb0">&lt;/</span><span style="color:#ec5b7c">view</span><span style="color:#b02fb0">&gt;</span></div>
<div class="ln" style="top:414px">30</div>
<div class="cl" style="top:414px">       <span style="color:#b02fb0">&lt;</span><span style="color:#ec5b7c">view</span> <span style="color:#4f5b6b">class</span><span style="color:#b02fb0">=</span><span style="color:#c5680f">"chuigetitle"</span><span style="color:#b02fb0">&gt;</span><span class="cj">恭喜闯关成功</span><span style="color:#b02fb0">&lt;/</span><span style="color:#ec5b7c">view</span><span style="color:#b02fb0">&gt;</span></div>
<div class="ln" style="top:432px">31</div>
<div class="cl" style="top:432px">       <span style="color:#b02fb0">&lt;</span><span style="color:#ec5b7c">view</span> <span style="color:#4f5b6b">class</span><span style="color:#b02fb0">=</span><span style="color:#c5680f">"chuigecon"</span><span style="color:#b02fb0">&gt;</span><span class="cj">连续答题有机会获得红包</span><span style="color:#b02fb0">&lt;/</span><span style="color:#ec5b7c">view</span><span style="color:#b02fb0">&gt;</span></div>
<div class="ln" style="top:450px">32</div>
<div class="cl" style="top:450px">       <span style="color:#b02fb0">&lt;</span><span style="color:#ec5b7c">view</span> <span style="color:#4f5b6b">bind:tap</span><span style="color:#b02fb0">=</span><span style="color:#c5680f">"chuigedown"</span> <span style="color:#4f5b6b">class</span><span style="color:#b02fb0">=</span><span style="color:#c5680f">"chuigebtn"</span><span style="color:#b02fb0">&gt;</span><span class="cj">进入下一关</span><span style="color:#b02fb0">&lt;/</span><span style="color:#ec5b7c">view</span><span style="color:#b02fb0">&gt;</span></div>
<div class="a" style="left:90.4px;top:108px;width:7.6px;height:16px;border:1px solid #b9c3b9;background:rgba(180,200,180,0.35)"></div>
<div class="a" style="left:130.0px;top:108px;width:7.6px;height:16px;border:1px solid #b9c3b9;background:rgba(180,200,180,0.35)"></div>
  </div></div>
  <div class="a" style="left:0;top:30px;width:749px;height:22px;box-shadow:0 1px 2px rgba(0,0,0,0.07)"></div>
  <div class="a" style="left:735px;top:52px;width:1px;height:407px;background:#d6d6d6"></div>
  <div class="a" style="left:736px;top:114px;width:13px;height:2px;background:#222"></div>
  <div class="a" style="left:740px;top:116px;width:5px;height:4px;background:#999"></div>
</div>
<div id="dbg" class="a">
  <div class="a" style="left:0;top:0;width:749px;height:1px;background:#fff"></div>
  <div class="a" style="left:0;top:1px;width:749px;height:1px;background:#d8d8d8"></div>
  <div class="dt" style="left:20px;color:#222">调试器</div>
  <div class="a" style="left:20px;top:33px;width:33px;height:2px;background:#444"></div>
  <div class="dt" style="left:73px">问题</div>
  <div class="dt" style="left:115px">输出</div>
  <div class="dt" style="left:156.5px">终端</div>
  <svg width="60" height="30" style="left:680px;top:8px" fill="none">
    <path d="M7 13.6 L11.5 9 L16 13.6" stroke="#333" stroke-width="1.2"/>
    <path d="M38.6 6.6 L47.4 15.4 M47.4 6.6 L38.6 15.4" stroke="#333" stroke-width="1.2"/>
  </svg>
  <div class="a" style="left:0;top:62px;width:749px;height:1px;background:#cfcfcf"></div>
  <svg width="40" height="24" style="left:0;top:39px" fill="none">
    <path d="M15 16 H10.8 V4.8 H21.6 V8.8" stroke="#666" stroke-width="1.2"/>
    <path d="M14.6 9.8 L21.8 12.6 L18.8 13.8 L21.8 17.2 L20.6 18.4 L17.6 15 L16.2 17.8 Z" fill="#666"/>
  </svg>
  <div class="a" style="left:34px;top:41px;width:1px;height:15px;background:#d0d0d0"></div>
  <div class="dv" style="left:53px;color:#333">Wxml</div>
  <div class="a" style="left:41px;top:60px;width:54px;height:2px;background:#1a73e8"></div>
  <div class="dv" style="left:106px">Console</div>
  <div class="dv" style="left:172px">Sources</div>
  <div class="dv" style="left:238px">Network</div>
  <div class="dv" style="left:307px">Memory</div>
  <div class="dv" style="left:374.5px">Security</div>
  <div class="dv" style="left:441px">Mock</div>
  <div class="dv" style="left:493.5px">AppData</div>
  <div class="dv" style="left:563.5px">Audits</div>
  <svg width="20" height="20" style="left:614px;top:40px" fill="none"><path d="M3.6 6.6 L7.4 10.4 L3.6 14.2 M8 6.6 L11.8 10.4 L8 14.2" stroke="#333" stroke-width="1.2"/></svg>
  <svg width="14" height="14" style="left:659px;top:42px"><path d="M6 1.2 L11.2 10.8 H0.8 Z" fill="#f4b400"/><rect x="5.5" y="4.6" width="1.1" height="3.6" fill="#fff"/><rect x="5.5" y="8.8" width="1.1" height="1.1" fill="#fff"/></svg>
  <div class="dv" style="left:673.5px">4</div>
  <div class="a" style="left:686px;top:42px;width:1px;height:14px;background:#d0d0d0"></div>
  <svg width="20" height="20" style="left:695px;top:39px"><circle cx="10" cy="4.6" r="1.3" fill="#444"/><circle cx="10" cy="9.8" r="1.3" fill="#444"/><circle cx="10" cy="15" r="1.3" fill="#444"/></svg>
  <svg width="20" height="20" style="left:724px;top:40px" fill="none"><rect x="5.2" y="3.6" width="11.4" height="8.6" stroke="#666" stroke-width="1.6"/><path d="M2.4 6.8 V15 H13.2" stroke="#666" stroke-width="1.6"/></svg>

  <div class="a" style="left:0;top:63px;width:424px;height:88px;background:#fff"></div>
  <div class="a" style="left:0;top:127.5px;width:424px;height:1px;background:#dadada"></div>
  <div class="mt" style="top:66.8px;left:14px"><span class="bk">&lt;</span><span class="tg">page</span><span class="bk">&gt;</span></div>
  <svg width="8" height="10" style="left:17px;top:87px"><path d="M0.5 0.8 L5.4 3.9 L0.5 7 Z" fill="#555"/></svg>
  <div class="mt" style="top:83.6px;left:25.6px"><span class="bk">&lt;</span><span class="tg">view</span><span class="bk">&gt;</span><span class="tg">…</span><span class="bk">&lt;/</span><span class="tg">view</span><span class="bk">&gt;</span></div>
  <div class="mt" style="top:100.4px;left:14px"><span class="bk">&lt;/</span><span class="tg">page</span><span class="bk">&gt;</span></div>

  <div class="a" style="left:424px;top:63px;width:1px;height:88px;background:#d0d0d0"></div>
  <div class="a" style="left:425px;top:63px;width:324px;height:88px;background:#fff"></div>
  <div class="a" style="left:425px;top:63px;width:324px;height:26px;background:#f3f3f3"></div>
  <div class="a" style="left:425px;top:88.5px;width:324px;height:1px;background:#d4d4d4"></div>
  <div class="dv" style="left:435px;top:64px;line-height:26px;color:#333">Styles</div>
  <div class="a" style="left:425px;top:87px;width:50px;height:2px;background:#1a73e8"></div>
  <div class="dv" style="left:484.5px;top:64px;line-height:26px">Computed</div>
  <div class="dv" style="left:561px;top:64px;line-height:26px">Dataset</div>
  <div class="dv" style="left:620.5px;top:64px;line-height:26px">Component Data</div>
  <svg width="20" height="20" style="left:726px;top:66px" fill="none"><path d="M3.6 6.2 L7.4 10 L3.6 13.8 M8 6.2 L11.8 10 L8 13.8" stroke="#333" stroke-width="1.2"/></svg>
  <div class="a" style="left:425px;top:89px;width:324px;height:28px;background:#f3f3f3"></div>
  <div class="a" style="left:428px;top:93px;width:261px;height:20px;background:#fff"></div>
  <div class="dv" style="left:432px;top:93px;line-height:20px;color:#888">Filter</div>
  <div class="a" style="left:700px;top:94px;font-family:'Liberation Mono',monospace;font-size:11.5px;line-height:20px;color:#333;font-weight:bold">.cls</div>
  <div class="a" style="left:425px;top:116.5px;width:307px;height:1px;background:#d8d8d8"></div>
  <div class="a" style="left:732px;top:89px;width:17px;height:62px;background:#f1f1f1"></div>
  <svg width="17" height="62" style="left:732px;top:89px"><path d="M5 11.4 L8.5 7.8 L12 11.4 Z" fill="#555"/><rect x="4" y="17.8" width="9.4" height="16.4" fill="#c1c1c1"/><path d="M5 49.6 L8.5 53.2 L12 49.6 Z" fill="#555"/></svg>
</div>
<div id="foot" class="a">
  <div class="ft" style="left:7px">页面路径</div>
  <span class="caret" style="left:58.5px;top:11.5px;border-top-color:#666;border-left-width:3.5px;border-right-width:3.5px"></span>
  <div class="a" style="left:74px;top:8px;width:1px;height:13px;background:#c8c8c8"></div>
  <div class="ft" style="left:82.5px;font-size:13.2px">pages/game/game</div>
  <svg width="20" height="20" style="left:196px;top:5px" fill="none"><path d="M3.4 12.6 V5.6 Q3.4 4.4 4.6 4.4 H12.2" stroke="#555" stroke-width="1.1"/><rect x="5.8" y="6.8" width="8.4" height="9.4" rx="0.6" stroke="#555" stroke-width="1.1"/></svg>
  <svg width="60" height="22" style="left:356px;top:4px" fill="none"><path d="M4.6 10.6 C6.8 7.6 9 6.6 12 6.6 C15 6.6 17.2 7.6 19.4 10.6 C17.2 13.6 15 14.6 12 14.6 C9 14.6 6.8 13.6 4.6 10.6 Z" stroke="#666" stroke-width="1.1"/><circle cx="12" cy="10.6" r="2.2" stroke="#666" stroke-width="1.1"/><circle cx="39" cy="10.4" r="1" fill="#666"/><circle cx="43.5" cy="10.4" r="1" fill="#666"/><circle cx="48" cy="10.4" r="1" fill="#666"/></svg>
  <div class="a" style="left:416px;top:0;width:1px;height:22px;background:#dedede"></div>
  <svg width="60" height="22" style="left:430px;top:4px" fill="none"><circle cx="8.7" cy="10" r="6" stroke="#666" stroke-width="1.1"/><path d="M6.2 7.5 L11.2 12.5 M11.2 7.5 L6.2 12.5" stroke="#666" stroke-width="1.1"/><path d="M37.2 4.6 L43.4 15.6 H31 Z" stroke="#666" stroke-width="1.1" stroke-linejoin="round"/><path d="M37.2 8.4 V11.8 M37.2 13 V13.9" stroke="#666" stroke-width="1.1"/></svg>
  <div class="ft" style="left:450px">0</div>
  <div class="ft" style="left:477.5px">0</div>
  <div class="ft" style="left:1059px">行 13，列 12</div>
  <div class="ft" style="left:1146.5px">空格: 2</div>
  <div class="ft" style="left:1200.5px">UTF-8</div>
  <div class="ft" style="left:1251px">LF</div>
  <div class="ft" style="left:1279.5px">WXML</div>
  <svg width="20" height="24" style="left:1333px;top:2px" fill="none"><path d="M5 17 V11.4 Q5 6.8 10 6.8 Q15 6.8 15 11.4 V17 M3.6 17.2 H16.4 M10 4.4 V6.6 M8.8 19.6 H11.2" stroke="#555" stroke-width="1.1"/></svg>
</div>
</body></html>
